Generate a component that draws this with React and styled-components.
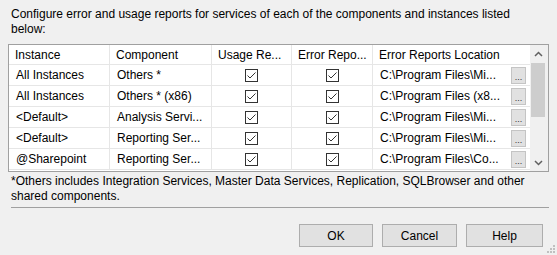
import React from "react";
import styled, { createGlobalStyle } from "styled-components";

const GlobalStyle = createGlobalStyle`
  html, body {
    margin: 0;
    padding: 0;
    background: #f0f0f0;
  }
  body {
    font-family: "Liberation Sans", Arial, sans-serif;
    font-size: 12px;
    color: #000;
  }
`;

const Dialog = styled.div`
  position: relative;
  width: 557px;
  height: 255px;
  box-sizing: border-box;
  padding: 7px 8px 0 8px;
  display: flex;
  flex-direction: column;
  overflow: hidden;
`;

const Intro = styled.p`
  margin: 0 0 0 3px;
  line-height: 15px;
`;

const Grid = styled.div`
  margin-top: 7px;
  width: 541px;
  height: 128px;
  box-sizing: border-box;
  border: 1px solid #a0a0a0;
  background: #fff;
  display: flex;
`;

const Table = styled.div`
  flex: 1;
  overflow: hidden;
`;

const Row = styled.div`
  display: grid;
  grid-template-columns: 101px 102px 80px 81px 157px;
  height: ${({ h }) => h || "21px"};
  border-bottom: 1px solid #e6e6e6;
  box-sizing: border-box;
`;

const Cell = styled.div`
  display: flex;
  align-items: center;
  justify-content: ${({ center }) => (center ? "center" : "flex-start")};
  padding-left: ${({ center }) => (center ? "0" : "7px")};
  border-right: 1px solid #e6e6e6;
  white-space: nowrap;
  overflow: hidden;
  box-sizing: border-box;
`;

const HeadCell = styled(Cell)`
  padding-left: 6px;
  border-right: ${({ last }) => (last ? "none" : "1px solid #e6e6e6")};
`;

const LocationCell = styled(Cell)`
  border-right: none;
  justify-content: space-between;
  padding-right: 4px;
`;

const DotsButton = styled.div`
  width: 15px;
  height: 17px;
  box-sizing: border-box;
  background: #e1e1e1;
  border: 1px solid #c4c4c4;
  display: flex;
  align-items: flex-end;
  justify-content: center;
  font-size: 9px;
  line-height: 12px;
  color: #333;
`;

const Check = styled.span`
  width: 13px;
  height: 13px;
  box-sizing: border-box;
  border: 1px solid #333;
  background: #fff;
  display: flex;
  align-items: center;
  justify-content: center;
`;

const ScrollBar = styled.div`
  width: 17px;
  background: #f0f0f0;
  display: flex;
  flex-direction: column;
  padding-right: 1px;
`;

const Arrow = styled.div`
  height: 17px;
  display: flex;
  align-items: center;
  justify-content: center;
`;

const Track = styled.div`
  flex: 1;
  padding: 1px 2px 0 1px;
`;

const Thumb = styled.div`
  height: 54px;
  background: #cdcdcd;
`;

const Footnote = styled.p`
  margin: 2px 0 0 3px;
  line-height: 15px;
`;

const Separator = styled.div`
  margin: 3px 0 0 3px;
  width: 538px;
  height: 1px;
  background: #a0a0a0;
`;

const Buttons = styled.div`
  display: flex;
  justify-content: flex-end;
  gap: 9px;
  margin-top: 16px;
  padding-right: 6px;
`;

const Button = styled.button`
  width: ${({ w }) => w || "75px"};
  height: 23px;
  box-sizing: border-box;
  background: #e1e1e1;
  border: 1px solid #adadad;
  font-family: "Liberation Sans", Arial, sans-serif;
  font-size: 12px;
  color: #000;
  padding: 0;
`;

const Grip = styled.svg`
  position: absolute;
  right: 2px;
  bottom: 2px;
`;

const rows = [
  ["All Instances", "Others *", "C:\\Program Files\\Mi..."],
  ["All Instances", "Others * (x86)", "C:\\Program Files (x8..."],
  ["<Default>", "Analysis Servi...", "C:\\Program Files\\Mi..."],
  ["<Default>", "Reporting Ser...", "C:\\Program Files\\Mi..."],
  ["@Sharepoint", "Reporting Ser...", "C:\\Program Files\\Co..."],
];

const CheckBox = () => (
  <Check>
    <svg width="11" height="11" viewBox="0 0 11 11">
      <path d="M1.5 5.5 L4 8 L9.5 2.5" fill="none" stroke="#333" strokeWidth="1" />
    </svg>
  </Check>
);

export default function App() {
  return (
    <>
      <GlobalStyle />
      <Dialog>
        <Intro>
          Configure error and usage reports for services of each of the components and instances listed
          <br />
          below:
        </Intro>
        <Grid>
          <Table>
            <Row h="20px">
              <HeadCell>Instance</HeadCell>
              <HeadCell>Component</HeadCell>
              <HeadCell>Usage Re...</HeadCell>
              <HeadCell>Error Repo...</HeadCell>
              <HeadCell last>Error Reports Location</HeadCell>
            </Row>
            {rows.map(([inst, comp, loc], i) => (
              <Row key={i}>
                <Cell>{inst}</Cell>
                <Cell>{comp}</Cell>
                <Cell center>
                  <CheckBox />
                </Cell>
                <Cell center>
                  <CheckBox />
                </Cell>
                <LocationCell>
                  {loc}
                  <DotsButton>...</DotsButton>
                </LocationCell>
              </Row>
            ))}
          </Table>
          <ScrollBar>
            <Arrow>
              <svg width="9" height="6" viewBox="0 0 9 6">
                <path d="M1 5 L4.5 1.5 L8 5" fill="none" stroke="#606060" strokeWidth="1.5" />
              </svg>
            </Arrow>
            <Track>
              <Thumb />
            </Track>
            <Arrow>
              <svg width="9" height="6" viewBox="0 0 9 6">
                <path d="M1 1 L4.5 4.5 L8 1" fill="none" stroke="#606060" strokeWidth="1.5" />
              </svg>
            </Arrow>
          </ScrollBar>
        </Grid>
        <Footnote>
          *Others includes Integration Services, Master Data Services, Replication, SQLBrowser and other
          <br />
          shared components.
        </Footnote>
        <Separator />
        <Buttons>
          <Button w="74px">OK</Button>
          <Button>Cancel</Button>
          <Button w="77px">Help</Button>
        </Buttons>
        <Grip width="8" height="8" viewBox="0 0 8 8">
          <rect x="6" y="0" width="2" height="2" fill="#c0c0c0" />
          <rect x="3" y="3" width="2" height="2" fill="#c0c0c0" />
          <rect x="6" y="3" width="2" height="2" fill="#c0c0c0" />
          <rect x="0" y="6" width="2" height="2" fill="#c0c0c0" />
          <rect x="3" y="6" width="2" height="2" fill="#c0c0c0" />
          <rect x="6" y="6" width="2" height="2" fill="#c0c0c0" />
        </Grip>
      </Dialog>
    </>
  );
}
